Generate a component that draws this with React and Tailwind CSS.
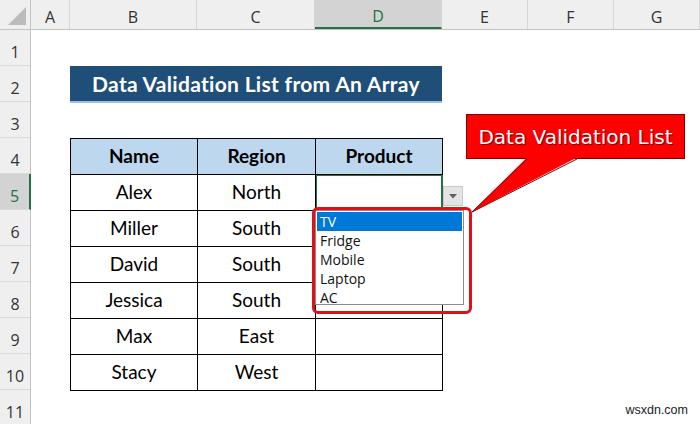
import React from "react";

const columns = [
  { label: "A", w: "w-[39px]" },
  { label: "B", w: "w-[127px]" },
  { label: "C", w: "w-[118px]" },
  { label: "D", w: "w-[127px]", selected: true },
  { label: "E", w: "w-[86px]" },
  { label: "F", w: "w-[86px]" },
  { label: "G", w: "w-[86px]" },
];

const rows = [
  ["Alex", "North"],
  ["Miller", "South"],
  ["David", "South"],
  ["Jessica", "South"],
  ["Max", "East"],
  ["Stacy", "West"],
];

const products = ["TV", "Fridge", "Mobile", "Laptop", "AC"];

const headFont = { fontFamily: '"Open Sans", "Noto Sans", sans-serif' };

export default function App() {
  return (
    <div
      className="relative w-[700px] h-[424px] overflow-hidden bg-white"
      style={{ fontFamily: 'Lato, "Open Sans", sans-serif' }}
    >
      {/* column headers */}
      <div className="flex h-[30px] bg-[#efefef] border-b border-[#c4c4c4]" style={headFont}>
        <div className="w-[31px] border-r border-[#c4c4c4] flex items-end justify-end pr-[3px] pb-[3px]">
          <svg width="20" height="20" viewBox="0 0 20 20">
            <polygon points="19,1 19,19 1,19" fill="#bcbcbc" />
          </svg>
        </div>
        {columns.map((c) => (
          <div
            key={c.label}
            className={`${c.w} flex items-center justify-center text-[16px] pt-[4px] border-r border-[#d6d6d6] ${
              c.selected
                ? "bg-[#d3d3d3] text-[#217346] border-b-2 border-b-[#217346]"
                : "text-[#333]"
            }`}
          >
            {c.label}
          </div>
        ))}
      </div>

      <div className="flex">
        {/* row headers */}
        <div className="w-[31px] flex flex-col bg-[#efefef] border-r border-[#c4c4c4]" style={headFont}>
          {Array.from({ length: 11 }, (_, i) => i + 1).map((n) => (
            <div
              key={n}
              className={`h-[36px] shrink-0 flex items-center justify-center pt-[9px] text-[16px] border-b border-[#dadada] ${
                n === 5 ? "bg-[#d3d3d3] text-[#217346] -mr-px border-r-2 border-r-[#217346]" : "text-[#333]"
              }`}
            >
              {n}
            </div>
          ))}
        </div>

        {/* sheet body */}
        <div className="pl-[39px]">
          <div className="h-[36px]" />
          <div className="w-[372px] h-[37px] bg-[#1f4e79] border-b-2 border-[#9bc2e6] flex items-center justify-center text-white font-bold text-[21px] tracking-[0.3px]">
            Data Validation List from An Array
          </div>
          <div className="h-[35px]" />
          <div className="w-[373px] border-l border-t border-black text-[19px] text-black">
            <div className="flex bg-[#bdd7ee] font-bold">
              <div className="w-[127px] h-[36px] flex items-center justify-center border-r border-b border-black">Name</div>
              <div className="w-[118px] h-[36px] flex items-center justify-center border-r border-b border-black">Region</div>
              <div className="w-[127px] h-[36px] flex items-center justify-center border-r border-b border-black">Product</div>
            </div>
            {rows.map(([name, region], i) => (
              <div key={name} className="flex">
                <div className="w-[127px] h-[36px] flex items-center justify-center border-r border-b border-black">{name}</div>
                <div className="w-[118px] h-[36px] flex items-center justify-center border-r border-b border-black">{region}</div>
                <div
                  className={`w-[127px] h-[36px] border-r border-b border-black ${
                    i === 0 ? "shadow-[inset_0_0_0_1px_#217346] border-r-[#217346]" : ""
                  }`}
                />
              </div>
            ))}
          </div>
        </div>
      </div>

      {/* dropdown arrow */}
      <div className="absolute left-[443px] top-[186px] w-[20px] h-[20px] bg-[#e4e4e4] border border-[#c8c8c8] flex items-center justify-center">
        <svg width="8" height="5" viewBox="0 0 8 5">
          <polygon points="0,0 8,0 4,4.5" fill="#606060" />
        </svg>
      </div>

      {/* dropdown list */}
      <div
        className="absolute left-[315px] top-[210px] w-[149px] h-[95px] bg-white border border-[#8c8c8c] pt-[1px] px-[1px] text-[14px] text-[#111]"
        style={headFont}
      >
        {products.map((p, i) => (
          <div
            key={p}
            className={`h-[19px] leading-[19px] pl-[3px] ${i === 0 ? "bg-[#0078d7] text-white" : ""}`}
          >
            {p}
          </div>
        ))}
      </div>

      {/* red highlight round the list */}
      <div className="absolute left-[312px] top-[207px] w-[160px] h-[107px] border-[3px] border-[#e0101a] rounded-[6px]" />

      {/* callout */}
      <div
        className="absolute left-[466px] top-[114px] w-[219px] h-[45px] bg-[#ff0000] border border-[#7a0000] flex items-center justify-center text-white text-[20px] [text-shadow:1px_1px_1px_rgba(60,0,0,0.8)]"
        style={{ fontFamily: '"DejaVu Sans", sans-serif' }}
      >
        Data Validation List
      </div>
      <svg className="absolute left-0 top-0" width="700" height="424" viewBox="0 0 700 424">
        <polygon points="527,157.5 577,157.5 472,212" fill="#ff0000" />
        <polyline points="527,159 472,212 577,159" fill="none" stroke="#8a0000" strokeWidth="1" />
      </svg>

      {/* watermark */}
      <div
        className="absolute right-[12px] bottom-[4px] text-[12.5px] text-[#222]"
        style={{ fontFamily: '"Liberation Sans", Arial, sans-serif' }}
      >
        wsxdn.com
      </div>
    </div>
  );
}
